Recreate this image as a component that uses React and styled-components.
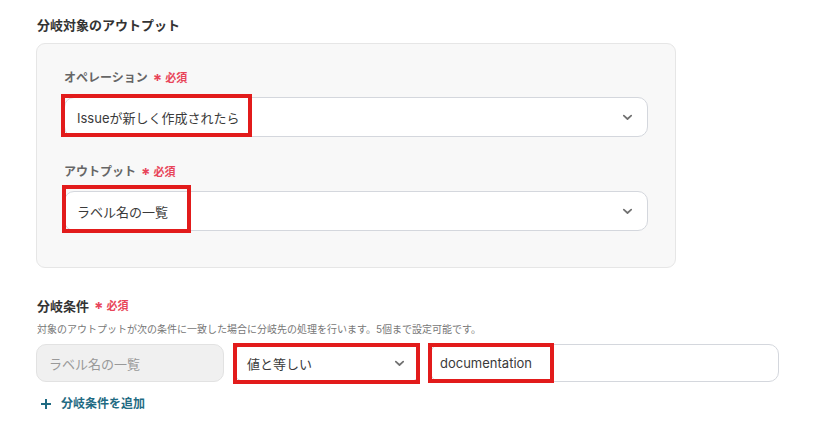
import React from "react";
import styled, { createGlobalStyle } from "styled-components";

const GlobalStyle = createGlobalStyle`
	body {
		margin: 0;
		background: #fff;
		font-family: "Inter", "Noto Sans CJK JP", sans-serif;
		color: #333;
	}
`;

function Chevron() {
	return (
		<svg width='11' height='7' viewBox='0 0 11 7' fill='none'>
			<path
				d='M1.8 1.6 L5.5 5 L9.2 1.6'
				stroke='#707070'
				strokeWidth='1.7'
				strokeLinecap='round'
				strokeLinejoin='round'
			/>
		</svg>
	);
}

function Required() {
	return (
		<Req>
			<Star>*</Star>必須
		</Req>
	);
}

export default function App() {
	return (
		<Page>
			<GlobalStyle />
			<Heading>分岐対象のアウトプット</Heading>
			<Panel>
				<Field>
					<Label>
						オペレーション
						<Required />
					</Label>
					<Control>
						<Select>
							<span>Issueが新しく作成されたら</span>
							<Chevron />
						</Select>
						<Mark $left={-3} $top={-3} $w={191} $h={43} />
					</Control>
				</Field>
				<Field>
					<Label>
						アウトプット
						<Required />
					</Label>
					<Control>
						<Select>
							<span>ラベル名の一覧</span>
							<Chevron />
						</Select>
						<Mark $left={-2} $top={-6} $w={129} $h={48} />
					</Control>
				</Field>
			</Panel>

			<Section>
				<Heading>
					分岐条件
					<Required />
				</Heading>
				<Note>
					対象のアウトプットが次の条件に一致した場合に分岐先の処理を行います。5個まで設定可能です。
				</Note>
				<Row>
					<Control $w={188}>
						<Input $disabled>ラベル名の一覧</Input>
					</Control>
					<Control $w={186}>
						<Input>
							<span>値と等しい</span>
							<Chevron />
						</Input>
						<Mark $left={-1} $top={-1} $w={187} $h={41} />
					</Control>
					<Control $w={349}>
						<Input $pad={9}>documentation</Input>
						<Mark $left={-2} $top={-1} $w={126} $h={40} />
					</Control>
				</Row>
				<AddButton>
					<svg width='12' height='12' viewBox='0 0 12 12'>
						<path
							d='M6 1 V11 M1 6 H11'
							stroke='#1f6b83'
							strokeWidth='2'
						/>
					</svg>
					分岐条件を追加
				</AddButton>
			</Section>
		</Page>
	);
}

const Page = styled.div`
	padding: 16px 0 0 37px;
	width: 760px;
`;

const Heading = styled.div`
	font-size: 13px;
	font-weight: 700;
	line-height: 18px;
	color: #333;
	display: flex;
	align-items: center;
`;

const Panel = styled.div`
	margin: 9px 0 0 -1px;
	width: 640px;
	box-sizing: border-box;
	background: #f8f8f8;
	border: 1px solid #e6e6e6;
	border-radius: 9px;
	padding: 25px 27px 36px;
	display: flex;
	flex-direction: column;
	gap: 26px;
`;

const Field = styled.div`
	display: flex;
	flex-direction: column;
	gap: 10px;
`;

const Label = styled.div`
	font-size: 12px;
	font-weight: 700;
	line-height: 18px;
	color: #666;
	display: flex;
	align-items: center;
`;

const Req = styled.span`
	display: inline-flex;
	align-items: center;
	margin-left: 5px;
	color: #e8455a;
	font-size: 11px;
	font-weight: 700;
`;

const Star = styled.span`
	font-size: 17px;
	line-height: 10px;
	margin-right: 3px;
	position: relative;
	top: 3px;
`;

const Control = styled.div`
	position: relative;
	width: ${(p) => (p.$w ? `${p.$w}px` : "auto")};
`;

const Select = styled.div`
	height: 40px;
	box-sizing: border-box;
	background: #fff;
	border: 1px solid #d4d7dd;
	border-radius: 10px;
	padding: 0 14px 0 12px;
	display: flex;
	align-items: center;
	justify-content: space-between;
	font-size: 13px;
	color: #3a3a3a;
`;

const Mark = styled.div`
	position: absolute;
	left: ${(p) => p.$left}px;
	top: ${(p) => p.$top}px;
	width: ${(p) => p.$w}px;
	height: ${(p) => p.$h}px;
	box-sizing: border-box;
	border: 4px solid #e21b1b;
	pointer-events: none;
`;

const Section = styled.div`
	margin-top: 29px;
`;

const Note = styled.div`
	margin-top: 7px;
	font-size: 10px;
	line-height: 14px;
	color: #777;
`;

const Row = styled.div`
	margin: 8px 0 0 -1px;
	display: flex;
	gap: 10px;
`;

const Input = styled.div`
	height: 38px;
	box-sizing: border-box;
	background: ${(p) => (p.$disabled ? "#f0f0f0" : "#fff")};
	border: 1px solid ${(p) => (p.$disabled ? "#e2e2e2" : "#d4d7dd")};
	border-radius: 10px;
	padding: 0 14px 0 ${(p) => p.$pad ?? 12}px;
	display: flex;
	align-items: center;
	justify-content: space-between;
	font-size: 13px;
	color: ${(p) => (p.$disabled ? "#999" : "#3a3a3a")};
`;

const AddButton = styled.div`
	margin-top: 13px;
	display: flex;
	align-items: center;
	gap: 9px;
	padding-left: 3px;
	font-size: 12px;
	font-weight: 700;
	color: #1f6b83;
	line-height: 18px;
`;
